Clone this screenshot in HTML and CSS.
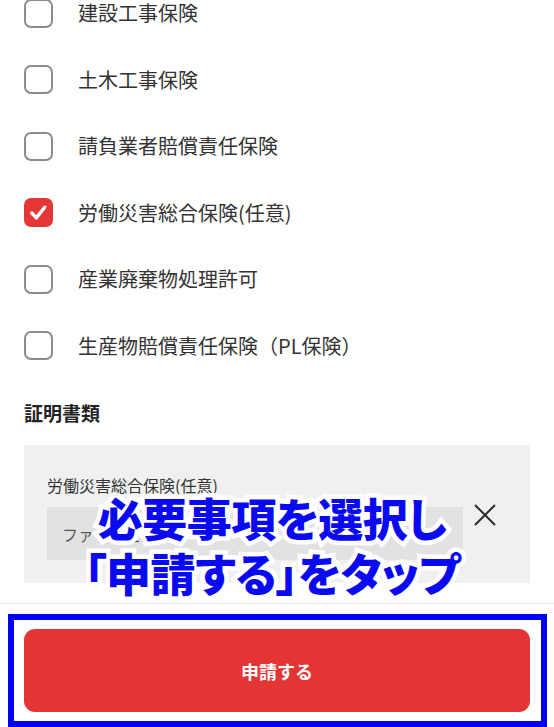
FILE: index.html
```html
<!DOCTYPE html>
<html lang="ja">
<head>
<meta charset="utf-8">
<link rel="stylesheet" href="styles.css">
</head>
<body>
<div class="page">
  <ul class="checklist">
    <li class="row"><span class="box"></span><span class="label">建設工事保険</span></li>
    <li class="row"><span class="box"></span><span class="label">土木工事保険</span></li>
    <li class="row"><span class="box"></span><span class="label">請負業者賠償責任保険</span></li>
    <li class="row"><span class="box checked"><svg viewBox="0 0 28 28" width="28" height="28"><path d="M6.5 14 L11.5 19.5 L21 7.5" fill="none" stroke="#fff" stroke-width="3.8" stroke-linecap="round" stroke-linejoin="round"/></svg></span><span class="label">労働災害総合保険(任意)</span></li>
    <li class="row"><span class="box"></span><span class="label">産業廃棄物処理許可</span></li>
    <li class="row"><span class="box"></span><span class="label">生産物賠償責任保険（PL保険）</span></li>
  </ul>
  <h2 class="heading">証明書類</h2>
  <div class="docs">
    <div class="doc-label">労働災害総合保険(任意)</div>
    <div class="doc-row">
      <div class="file">ファイルを選択</div>
      <div class="remove"><svg viewBox="0 0 24 24" width="24" height="24"><path d="M2 2 L22 22 M22 2 L2 22" stroke="#2a2a2a" stroke-width="2" fill="none"/></svg></div>
    </div>
  </div>
  <div class="footer">
    <button class="submit">申請する</button>
  </div>
  <div class="callout">必要事項を選択し<br>「申請する」をタップ</div>
  <div class="frame"></div>
</div>
</body>
</html>
```
FILE: styles.css
```css
html, body {
  margin: 0;
  padding: 0;
  background: #fff;
  overflow: hidden;
}
body {
  font-family: "Noto Sans CJK JP", "Noto Sans", sans-serif;
  color: #333;
}
.page {
  position: relative;
  width: 554px;
  height: 727px;
  overflow: hidden;
}
.checklist {
  list-style: none;
  margin: -20px 0 0 0;
  padding: 0 24px;
}
.row {
  height: 66.5px;
  display: flex;
  align-items: center;
}
.box {
  box-sizing: border-box;
  width: 29px;
  height: 29px;
  border: 2px solid #8c8c8c;
  border-radius: 7px;
  flex: none;
  display: flex;
  align-items: center;
  justify-content: center;
}
.box.checked {
  background: #e53636;
  border-color: #e53636;
}
.box svg {
  display: block;
}
.label {
  margin-left: 25px;
  font-size: 20px;
  line-height: 28px;
  color: #333;
}
.heading {
  margin: 21px 24px 0;
  font-size: 19px;
  line-height: 26px;
  font-weight: 700;
  color: #222;
}
.docs {
  margin: 19px 24px 0;
  background: #f0f0f0;
  padding: 28px 23px 23px;
}
.doc-label {
  font-size: 16px;
  line-height: 24px;
  color: #333;
}
.doc-row {
  margin-top: 10px;
  display: flex;
  align-items: center;
}
.file {
  flex: 1;
  height: 53px;
  background: #e2e2e2;
  display: flex;
  align-items: center;
  padding-left: 15px;
  font-size: 16px;
  color: #555;
}
.remove {
  width: 44px;
  display: flex;
  justify-content: center;
  margin-top: -38px;
}
.remove svg { display: block; }
.footer {
  margin-top: 20px;
  border-top: 1px solid #e6e6e6;
  padding: 25px 24px 15px;
}
.submit {
  display: block;
  width: 100%;
  height: 83px;
  border: none;
  border-radius: 11px;
  background: #e43535;
  color: #fff;
  font-family: "Noto Sans CJK JP", sans-serif;
  font-size: 18px;
  font-weight: 700;
}
.callout {
  position: absolute;
  left: 0;
  right: 10px;
  top: 490px;
  text-align: center;
  font-size: 45px;
  line-height: 55px;
  font-weight: 900;
  color: #0a0af0;
  -webkit-text-stroke: 9px #fff;
  paint-order: stroke fill;
  font-feature-settings: "palt";
  letter-spacing: -0.5px;
}
.frame {
  position: absolute;
  left: 8px;
  top: 614px;
  width: 539px;
  height: 113px;
  box-sizing: border-box;
  border: 6.5px solid #0000f5;
}
```
